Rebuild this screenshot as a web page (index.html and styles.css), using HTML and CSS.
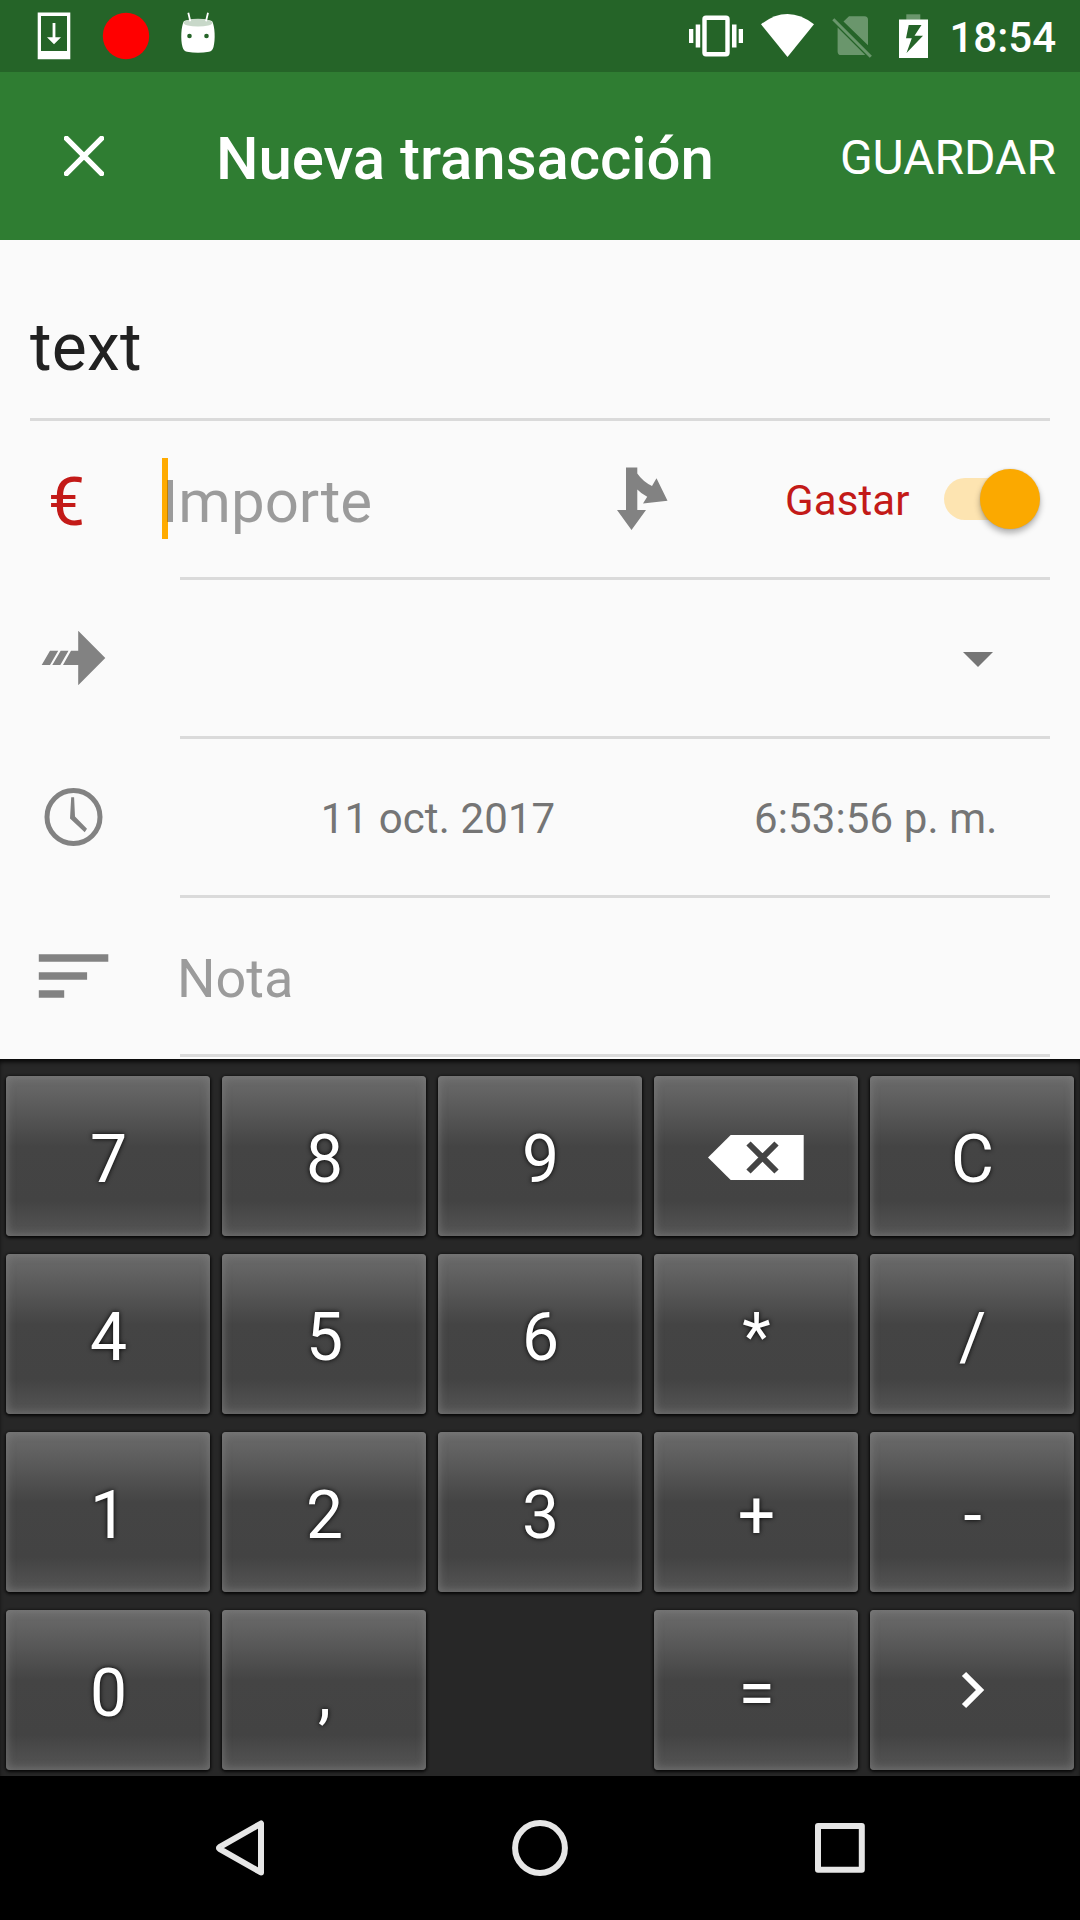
FILE: index.html
```html
<!DOCTYPE html>
<html lang="es">
<head>
<meta charset="utf-8">
<title>Nueva transacción</title>
<link rel="stylesheet" href="styles.css">
</head>
<body>
<div class="screen">
  <header class="status">
    <svg class="status-left" viewBox="0 0 240 72" width="240" height="72">
      <path fill="#fff" fill-rule="evenodd" d="M37.7 12.6h32.6v46.6H37.7zM41 16v35h26V16z"/>
      <path fill="#fff" d="M52.6 23h2.8v14.3H61L54 44.2l-7-6.9h5.6z"/>
      <circle cx="126" cy="36" r="23.2" fill="#f00"/>
      <path fill="#fff" d="M184 21q14-4 28 0c3 5 3.500 19 1.500 26q-1 4-4.500 4.800-11 2-22 0-3.500-.8-4.500-4.800c-2-7-1.500-21 1.500-26z"/>
      <ellipse cx="198" cy="22.700" rx="14.500" ry="3.900" fill="#c8d8c9"/>
      <path stroke="#fff" stroke-width="1.800" d="M188.300 12.800l2 8.500M208 12.800l-2 8.500"/>
      <circle cx="189.500" cy="36" r="2.300" fill="#256428"/><circle cx="206.500" cy="36" r="2.300" fill="#256428"/>
    </svg>
    <div class="status-right">
      <svg viewBox="680 0 260 72" width="260" height="72">
        <rect x="704.500" y="17.800" width="23" height="36.400" rx="1.500" fill="none" stroke="#fff" stroke-width="4.400"/>
        <path fill="#fff" d="M689 29h4.300v14H689zM695.700 24.500h4.500v23h-4.500zM732 24.500h4.500v23H732zM738.700 29h4.300v14h-4.300z"/>
        <path fill="#fff" d="M761 24.300q26.500-20.500 53 0L787.500 57z"/>
        <path fill="#6a966c" d="M843.500 21.500l5.500-5.300h15.500q3.500 0 3.500 3.500v25.500zM837.600 27.500l27.600 27.500h-24q-3.600 0-3.600-3.600z"/>
        <path stroke="#6a966c" stroke-width="3" d="M833.300 19.300l37.500 37.500"/>
        <path fill="#6a966c" d="M906.300 14.300h14v5.500h-14z"/>
        <path fill="#fff" fill-rule="evenodd" d="M899 19.600h29V58h-29zM908.700 25l-2.700 13.200h5.800L906.500 53 923 35.800h-8.500l7-10.800z"/>
      </svg>
      <span class="time">18:54</span>
    </div>
  </header>
  <div class="appbar">
    <svg class="close" viewBox="64 136 40 40" width="40" height="40"><path d="M64.500 136.500l39 39M103.500 136.500l-39 39" stroke="#fff" stroke-width="5.400"/></svg>
    <h1 class="title">Nueva transacción</h1>
    <span class="save">GUARDAR</span>
  </div>
  <main class="form">
    <div class="row payee"><span class="payee-text">text</span></div>
    <div class="row">
      <div class="lead euro">€</div>
      <div class="field amount">
        <span class="amount-hint"><i class="cursor"></i>Importe</span>
        <svg class="split" viewBox="616 466 54 66" width="54" height="66"><path fill="#828282" d="M626 467.500h11.300v6q5.500 8 14.700 12.500l4.500-7.700 11 22.400-24.500 2.800 4.200-6.800q-6-3-9.900-7.200V510h8.700L631.500 530 617 510h9z"/></svg>
        <span class="type">Gastar</span>
        <span class="switch"><span class="thumb"></span></span>
      </div>
    </div>
    <div class="row">
      <div class="lead"><svg viewBox="0 580 144 156" width="144" height="156"><path fill="#828282" d="M78.200 630.700L105.300 658l-27.100 27.300V665H63l8-14.200h7.200zM50 650.800h8.200L50 665h-8.300zM60.700 650.800h7.800L60.300 665h-8z"/></svg></div>
      <div class="field spinner"><svg viewBox="0 0 30 15" width="30" height="15"><path fill="#757575" d="M0 0h30L15 15z"/></svg></div>
    </div>
    <div class="row">
      <div class="lead"><svg viewBox="0 739 144 156" width="144" height="156"><circle cx="73.500" cy="817" r="26.500" fill="none" stroke="#828282" stroke-width="5"/><path d="M71.200 797.200h2.900l.9 19.300 12 12.200-2.300 3.500-14.700-13.600z" fill="#828282"/></svg></div>
      <div class="field when"><span class="date">11 oct. 2017</span><span class="hour">6:53:56 p. m.</span></div>
    </div>
    <div class="row">
      <div class="lead"><svg viewBox="0 898 144 156" width="144" height="156"><path fill="#828282" d="M38.800 954.200h69.500v7.500H38.800zM38.800 972.200h48.300v7.500H38.800zM38.800 990.200h25.400v7.500H38.800z"/></svg></div>
      <div class="field"><span class="note">Nota</span></div>
    </div>
  </main>
  <section class="keypad">
    <span class="key">7</span><span class="key">8</span><span class="key">9</span>
    <span class="key icon"><svg viewBox="654 1076 204 160" width="204" height="160"><path fill="#fff" d="M708 1157.500l22.700-22.500h73v45h-73z"/><path stroke="#444" stroke-width="6" d="M748.500 1143.500l28 28M776.500 1143.500l-28 28"/></svg></span>
    <span class="key">C</span>
    <span class="key">4</span><span class="key">5</span><span class="key">6</span><span class="key">*</span><span class="key">/</span>
    <span class="key">1</span><span class="key">2</span><span class="key">3</span><span class="key">+</span><span class="key">-</span>
    <span class="key">0</span><span class="key">,</span><span class="blank"></span><span class="key">=</span>
    <span class="key icon"><svg viewBox="870 1610 204 160" width="204" height="160"><path fill="none" stroke="#fff" stroke-width="6" d="M964 1674l16 16-16 16"/></svg></span>
  </section>
  <nav class="navbar">
    <svg viewBox="0 1776 1080 144" width="1080" height="144" fill="none" stroke="#e6e6e6" stroke-width="6" stroke-linejoin="round">
      <path d="M261 1823.500v49L219.500 1848.800q-1.200-.8 0-1.600z"/>
      <circle cx="540" cy="1848" r="24.900"/>
      <rect x="818" y="1826" width="43.800" height="43.800"/>
    </svg>
  </nav>
</div>
</body>
</html>
```
FILE: styles.css
```css
* { box-sizing: border-box; }
body { margin: 0; background: #000; font-family: Roboto, sans-serif; }
svg { display: block; flex: none; }
.screen { width: 1080px; height: 1920px; display: flex; flex-direction: column; overflow: hidden; background: #fafafa; }

.status { height: 72px; background: #256428; display: flex; justify-content: space-between; }
.status-right { display: flex; align-items: center; padding-right: 24px; }
.time { width: 116px; padding: 3px 0 0; text-align: right; color: #fff; font-size: 42px; font-weight: 500; }

.appbar { height: 168px; background: #2f7d32; color: #fff; display: flex; align-items: center; padding: 0 24px 0 64px; }
.title { flex: 1; margin: 0; padding: 5px 0 0 112px; font-size: 60px; line-height: 70px; font-weight: 500; letter-spacing: -.05px; white-space: nowrap; }
.save { padding-top: 3px; font-size: 48px; line-height: 56px; }

.form { height: 819px; }
.row { height: 159px; display: flex; padding-right: 30px; }
.payee { height: 181px; margin: 0 30px; padding: 38px 0 0; border-bottom: 3px solid #dadada; align-items: center; }
.payee-text { font-size: 66px; line-height: 78px; letter-spacing: .2px; color: #212121; }
.lead { width: 180px; flex: none; }
.euro { padding: 43px 0 0 48px; font-size: 66px; line-height: 78px; color: #c31a18; }
.field { flex: 1; height: 159px; border-bottom: 3px solid #dadada; display: flex; align-items: center; }
.amount-hint { position: relative; isolation: isolate; width: 454px; margin-left: -18px; padding-top: 5px; font-size: 60px; line-height: 70px; color: rgba(0,0,0,.38); }
.cursor { position: absolute; z-index: -1; left: 0; top: -4px; width: 6px; height: 81px; background: #ffab00; }
.type { width: 159px; margin-left: 115px; padding-top: 3px; font-size: 42px; line-height: 50px; letter-spacing: .1px; color: #c31a18; }
.switch { position: relative; width: 90px; height: 42px; border-radius: 21px; background: #fde4b1; }
.thumb { position: absolute; right: -6px; top: -9px; width: 60px; height: 60px; border-radius: 50%; background: #fba900; box-shadow: 0 4px 6px rgba(0,0,0,.3), 0 0 2px rgba(0,0,0,.15); }
.spinner { justify-content: flex-end; padding: 3px 57px 0 0; }
.when { padding-top: 3px; color: #757575; font-size: 42px; line-height: 50px; letter-spacing: .12px; }
.date { width: 516px; text-align: center; }
.hour { margin-left: 58px; white-space: nowrap; }
.note { margin-left: -3px; padding-top: 5px; color: #9b9b9b; font-size: 54px; }

.keypad { height: 717px; padding: 17px 6px 6px; background: #272727; box-shadow: inset 0 4px 4px -1px #080808; display: grid; grid-template-columns: repeat(5, 204px); grid-auto-rows: 160px; gap: 18px 12px; }
.key { display: flex; align-items: center; justify-content: center; padding: 7px 0 0 1px; border-radius: 4px; color: #fff; font-size: 66px; line-height: 78px; text-shadow: 0 0 5px #000; background: linear-gradient(#6b6b6b, #5a5a5a 20%, #444 44%, #434343 78%, #555); box-shadow: inset 0 0 8px 1px rgba(130,130,130,.65), 0 1px 3px 1px #080808; }
.icon { padding: 0; }

.navbar { height: 144px; background: #000; }
```
